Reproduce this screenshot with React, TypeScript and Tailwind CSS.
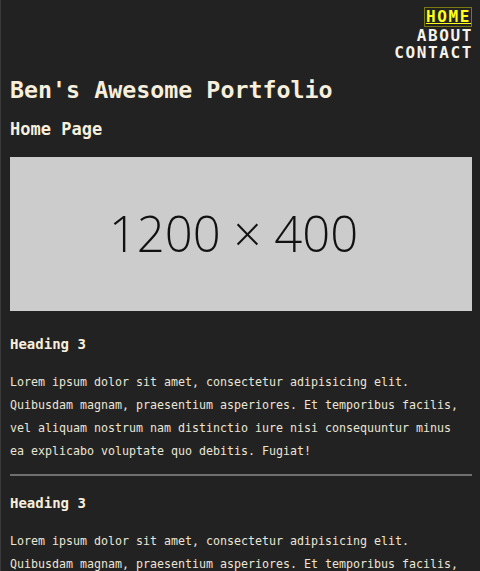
import React from "react";

const mono = "font-['DejaVu_Sans_Mono','Liberation_Mono',monospace]";

function Section({ first }: { first?: boolean }) {
  return (
    <section>
      <h3 className={`${mono} font-bold text-[14px] leading-[17px] text-[#f7efdc] ${first ? "mt-[25px]" : "mt-[19px]"}`}>
        Heading 3
      </h3>
      <p className={`${mono} mt-[18px] w-[455px] text-[11.63px] leading-[23px] text-[#ebe5d6]`}>
        Lorem ipsum dolor sit amet, consectetur adipisicing elit. Quibusdam magnam, praesentium asperiores. Et temporibus facilis, vel aliquam nostrum nam distinctio iure nisi consequuntur minus ea explicabo voluptate quo debitis. Fugiat!
      </p>
      <div className="mt-[11px] h-[2px] w-full bg-[#6f6f6f]" />
    </section>
  );
}

export default function App() {
  return (
    <div className="h-[571px] w-[480px] overflow-hidden bg-[#222222] border-l border-[#3a3a3a] pl-[9px] pr-[8px]">
      <nav className={`${mono} flex flex-col items-end pt-[7px] font-bold text-[16px] tracking-[1.6px] text-[#f7f3ea]`}>
        <a className="block border border-[#7a7a10] leading-[18px] pl-[1px] text-[#ffff1a] underline decoration-1 underline-offset-[1px]">
          HOME
        </a>
        <a className="block leading-[17px] mr-[-1px]">ABOUT</a>
        <a className="block leading-[17px] mr-[-1px]">CONTACT</a>
      </nav>
      <h1 className={`${mono} mt-[15px] font-bold text-[23.3px] leading-[28px] text-[#f7efdc]`}>
        Ben's Awesome Portfolio
      </h1>
      <h2 className={`${mono} mt-[15px] font-bold text-[17px] leading-[20px] text-[#f7efdc]`}>
        Home Page
      </h2>
      <div className="mt-[18px] flex h-[154px] w-full items-center justify-center bg-[#cccccc] pr-[15px]">
        <span className="font-['Open_Sans',sans-serif] font-light text-[49px] text-[#111111]">
          1200 × 400
        </span>
      </div>
      <Section first />
      <Section />
    </div>
  );
}
